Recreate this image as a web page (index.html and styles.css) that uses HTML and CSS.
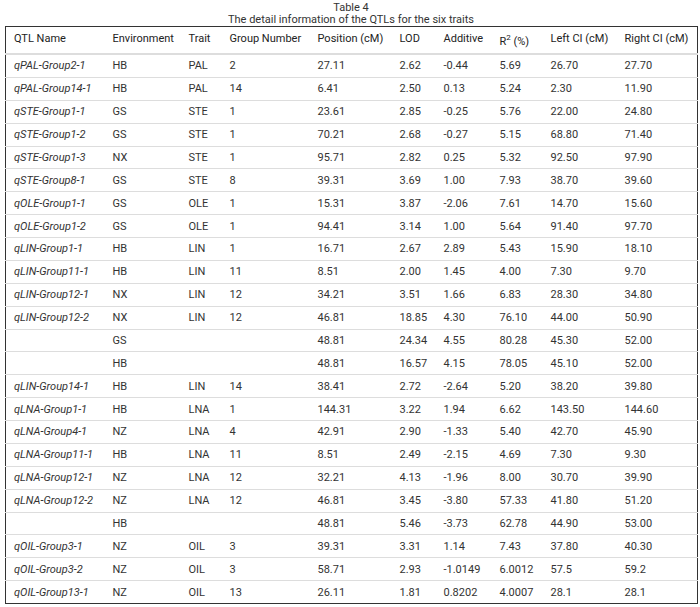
FILE: index.html
```html
<!DOCTYPE html>
<html>
<head>
<meta charset="utf-8">
<link rel="stylesheet" href="styles.css">
</head>
<body>
<div class="wrap">
<div class="caption">
<div>Table 4</div>
<div>The detail information of the QTLs for the six traits</div>
</div>
<table class="qtl">
<colgroup>
<col class="c1"><col class="c2"><col class="c3"><col class="c4"><col class="c5"><col class="c6"><col class="c7"><col class="c8"><col class="c9"><col class="c10">
</colgroup>
<thead>
<tr><th>QTL Name</th><th>Environment</th><th>Trait</th><th>Group Number</th><th>Position (cM)</th><th>LOD</th><th>Additive</th><th class="r2">R<sup>2</sup> (%)</th><th>Left CI (cM)</th><th>Right CI (cM)</th></tr>
</thead>
<tbody>
<tr><td class="n">qPAL-Group2-1</td><td>HB</td><td>PAL</td><td>2</td><td>27.11</td><td>2.62</td><td>-0.44</td><td>5.69</td><td>26.70</td><td>27.70</td></tr>
<tr><td class="n">qPAL-Group14-1</td><td>HB</td><td>PAL</td><td>14</td><td>6.41</td><td>2.50</td><td>0.13</td><td>5.24</td><td>2.30</td><td>11.90</td></tr>
<tr><td class="n">qSTE-Group1-1</td><td>GS</td><td>STE</td><td>1</td><td>23.61</td><td>2.85</td><td>-0.25</td><td>5.76</td><td>22.00</td><td>24.80</td></tr>
<tr><td class="n">qSTE-Group1-2</td><td>GS</td><td>STE</td><td>1</td><td>70.21</td><td>2.68</td><td>-0.27</td><td>5.15</td><td>68.80</td><td>71.40</td></tr>
<tr><td class="n">qSTE-Group1-3</td><td>NX</td><td>STE</td><td>1</td><td>95.71</td><td>2.82</td><td>0.25</td><td>5.32</td><td>92.50</td><td>97.90</td></tr>
<tr><td class="n">qSTE-Group8-1</td><td>GS</td><td>STE</td><td>8</td><td>39.31</td><td>3.69</td><td>1.00</td><td>7.93</td><td>38.70</td><td>39.60</td></tr>
<tr><td class="n">qOLE-Group1-1</td><td>GS</td><td>OLE</td><td>1</td><td>15.31</td><td>3.87</td><td>-2.06</td><td>7.61</td><td>14.70</td><td>15.60</td></tr>
<tr><td class="n">qOLE-Group1-2</td><td>GS</td><td>OLE</td><td>1</td><td>94.41</td><td>3.14</td><td>1.00</td><td>5.64</td><td>91.40</td><td>97.70</td></tr>
<tr><td class="n">qLIN-Group1-1</td><td>HB</td><td>LIN</td><td>1</td><td>16.71</td><td>2.67</td><td>2.89</td><td>5.43</td><td>15.90</td><td>18.10</td></tr>
<tr><td class="n">qLIN-Group11-1</td><td>HB</td><td>LIN</td><td>11</td><td>8.51</td><td>2.00</td><td>1.45</td><td>4.00</td><td>7.30</td><td>9.70</td></tr>
<tr><td class="n">qLIN-Group12-1</td><td>NX</td><td>LIN</td><td>12</td><td>34.21</td><td>3.51</td><td>1.66</td><td>6.83</td><td>28.30</td><td>34.80</td></tr>
<tr><td class="n">qLIN-Group12-2</td><td>NX</td><td>LIN</td><td>12</td><td>46.81</td><td>18.85</td><td>4.30</td><td>76.10</td><td>44.00</td><td>50.90</td></tr>
<tr><td class="n"></td><td>GS</td><td></td><td></td><td>48.81</td><td>24.34</td><td>4.55</td><td>80.28</td><td>45.30</td><td>52.00</td></tr>
<tr><td class="n"></td><td>HB</td><td></td><td></td><td>48.81</td><td>16.57</td><td>4.15</td><td>78.05</td><td>45.10</td><td>52.00</td></tr>
<tr><td class="n">qLIN-Group14-1</td><td>HB</td><td>LIN</td><td>14</td><td>38.41</td><td>2.72</td><td>-2.64</td><td>5.20</td><td>38.20</td><td>39.80</td></tr>
<tr><td class="n">qLNA-Group1-1</td><td>HB</td><td>LNA</td><td>1</td><td>144.31</td><td>3.22</td><td>1.94</td><td>6.62</td><td>143.50</td><td>144.60</td></tr>
<tr><td class="n">qLNA-Group4-1</td><td>NZ</td><td>LNA</td><td>4</td><td>42.91</td><td>2.90</td><td>-1.33</td><td>5.40</td><td>42.70</td><td>45.90</td></tr>
<tr><td class="n">qLNA-Group11-1</td><td>HB</td><td>LNA</td><td>11</td><td>8.51</td><td>2.49</td><td>-2.15</td><td>4.69</td><td>7.30</td><td>9.30</td></tr>
<tr><td class="n">qLNA-Group12-1</td><td>NZ</td><td>LNA</td><td>12</td><td>32.21</td><td>4.13</td><td>-1.96</td><td>8.00</td><td>30.70</td><td>39.90</td></tr>
<tr><td class="n">qLNA-Group12-2</td><td>NZ</td><td>LNA</td><td>12</td><td>46.81</td><td>3.45</td><td>-3.80</td><td>57.33</td><td>41.80</td><td>51.20</td></tr>
<tr><td class="n"></td><td>HB</td><td></td><td></td><td>48.81</td><td>5.46</td><td>-3.73</td><td>62.78</td><td>44.90</td><td>53.00</td></tr>
<tr><td class="n">qOIL-Group3-1</td><td>NZ</td><td>OIL</td><td>3</td><td>39.31</td><td>3.31</td><td>1.14</td><td>7.43</td><td>37.80</td><td>40.30</td></tr>
<tr><td class="n">qOIL-Group3-2</td><td>NZ</td><td>OIL</td><td>3</td><td>58.71</td><td>2.93</td><td>-1.0149</td><td>6.0012</td><td>57.5</td><td>59.2</td></tr>
<tr><td class="n">qOIL-Group13-1</td><td>NZ</td><td>OIL</td><td>13</td><td>26.11</td><td>1.81</td><td>0.8202</td><td>4.0007</td><td>28.1</td><td>28.1</td></tr>
</tbody>
</table>
</div>
</body>
</html>
```
FILE: styles.css
```css
html, body {
  margin: 0;
  padding: 0;
  background: #fff;
}
body {
  font-family: Roboto, "Liberation Sans", sans-serif;
  font-size: 11px;
  color: #333;
}
.wrap {
  padding: 2px 3px 0 5px;
}
.caption {
  text-align: center;
  line-height: 12px;
  color: #333;
}
.qtl {
  width: 692px;
  table-layout: fixed;
  border-collapse: collapse;
  border: 1px solid #333;
}
.c1 { width: 99px; }
.c2 { width: 76px; }
.c3 { width: 41px; }
.c4 { width: 88px; }
.c5 { width: 82px; }
.c6 { width: 44px; }
.c7 { width: 56px; }
.c8 { width: 51px; }
.c9 { width: 74px; }
.c10 { width: 81px; }
.qtl th {
  font-weight: normal;
  text-align: left;
  vertical-align: top;
  padding: 5px 0 0 8px;
  height: 18px;
  line-height: 13px;
  border-bottom: 2px solid #ddd;
  white-space: nowrap;
  color: #222;
}
.qtl th.r2 {
  padding-top: 8px;
}
.qtl sup {
  font-size: 8px;
  line-height: 0;
  vertical-align: 5px;
}
.qtl td {
  padding: 0 0 0 8px;
  height: 21.875px;
  border-bottom: 1px solid #ddd;
  white-space: nowrap;
}
.qtl tbody tr:last-child td {
  border-bottom: none;
}
.qtl td.n {
  font-style: italic;
}
```
